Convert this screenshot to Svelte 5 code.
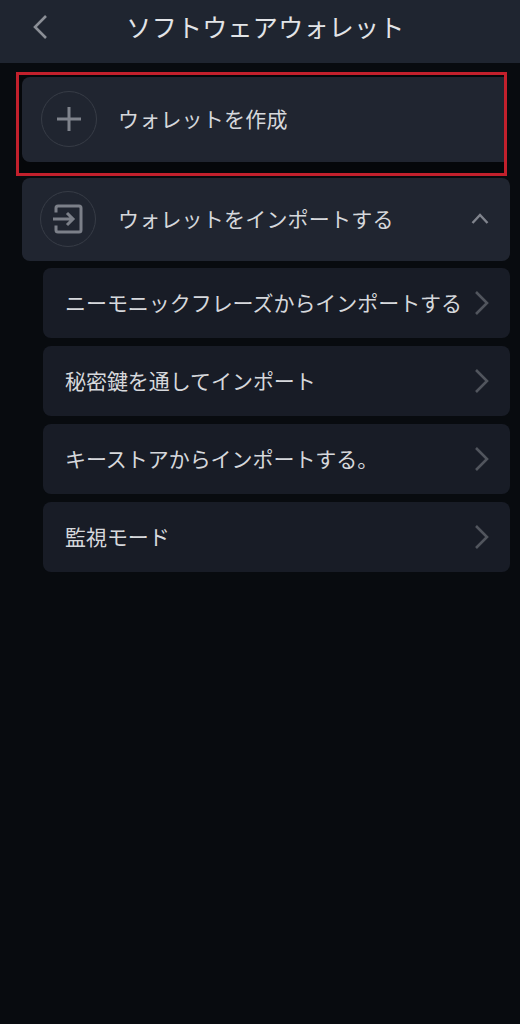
<script>
  const subs = ['ニーモニックフレーズからインポートする', '秘密鍵を通してインポート', 'キーストアからインポートする。', '監視モード'];
</script>

<div class="page">
  <header class="bar">
    <svg class="back" viewBox="0 0 16 26" width="16" height="26" fill="none"><path d="M14 2 3 13l11 11" stroke="#8b8f96" stroke-width="2.6"/></svg>
    <h1>ソフトウェアウォレット</h1>
  </header>

  <main class="list">
    <div class="highlight">
      <div class="card first">
        <span class="circle">
          <svg viewBox="0 0 26 26" width="26" height="26" fill="none"><path d="M13 1v24M1 13h24" stroke="#7f838c" stroke-width="3"/></svg>
        </span>
        <span class="label">ウォレットを作成</span>
      </div>
    </div>

    <div class="card second">
      <span class="circle">
        <svg viewBox="0 0 32 32" width="32" height="32" fill="none" stroke="#7c8089" stroke-width="3">
          <path d="M4 9.500V5a2 2 0 0 1 2-2h21a2 2 0 0 1 2 2v22a2 2 0 0 1-2 2H6a2 2 0 0 1-2-2v-4.500"/>
          <path d="M1 16h20M15 10l6 6-6 6"/>
        </svg>
      </span>
      <span class="label">ウォレットをインポートする</span>
      <svg class="up" viewBox="0 0 18 11" width="18" height="11" fill="none"><path d="M1.500 10 9 2l7.500 8" stroke="#80848d" stroke-width="2.400"/></svg>
    </div>

    <div class="subs">
      {#each subs as s}
        <div class="sub">
          <span class="subtext">{s}</span>
          <svg viewBox="0 0 15 26" width="15" height="26" fill="none"><path d="M2 2l11 11L2 24" stroke="#51555d" stroke-width="2.600"/></svg>
        </div>
      {/each}
    </div>
  </main>
</div>

<style>
  :global(body) {
    margin: 0;
    background: #080b0f;
  }
  .page {
    min-height: 1024px;
    background: #080b0f;
    font-family: "Noto Sans CJK JP", "Noto Sans", sans-serif;
    color: #d6d8dc;
  }
  .bar {
    height: 63px;
    background: #1f2530;
    display: flex;
    align-items: center;
    justify-content: center;
    position: relative;
  }
  .back {
    position: absolute;
    left: 32px;
    top: 14px;
  }
  h1 {
    margin: 0 0 11px;
    font-size: 25px;
    line-height: 36px;
    font-weight: 400;
    letter-spacing: 0.300px;
    color: #e2e4e7;
    padding-left: 11px;
  }
  .list {
    padding: 9px 10px 0 16px;
  }
  .highlight {
    width: 491px;
    height: 104px;
    box-sizing: border-box;
    border: 3px solid #c2202c;
    padding: 2px 0 0 3px;
    background: #05070a;
    margin-bottom: 2px;
  }
  .card {
    display: flex;
    align-items: center;
    background: #202530;
    border-radius: 8px;
    box-sizing: border-box;
  }
  .first {
    height: 85px;
    padding-left: 19px;
    padding-bottom: 1px;
    border-radius: 8px 0 0 8px;
  }
  .second {
    height: 83px;
    margin-left: 6px;
    padding-left: 18px;
    padding-right: 21px;
    padding-bottom: 2px;
  }
  .circle {
    width: 56px;
    height: 56px;
    flex: none;
    box-sizing: border-box;
    border: 1px solid #373c46;
    border-radius: 50%;
    display: flex;
    align-items: center;
    justify-content: center;
  }
  .label {
    margin: 0 0 2px 22px;
    font-size: 21px;
    letter-spacing: 0.200px;
    line-height: 30px;
    flex: 1;
  }
  .first .label {
    margin-left: 21px;
  }
  .subs {
    margin: 7px 0 0 27px;
    display: flex;
    flex-direction: column;
    gap: 8px;
  }
  .sub {
    height: 70px;
    background: #181c26;
    border-radius: 8px;
    padding: 0 21px 0 22px;
    display: flex;
    align-items: center;
    justify-content: space-between;
    font-size: 21px;
    letter-spacing: -0.050px;
    white-space: nowrap;
  }
  .subtext {
    margin-bottom: 2px;
  }
</style>
